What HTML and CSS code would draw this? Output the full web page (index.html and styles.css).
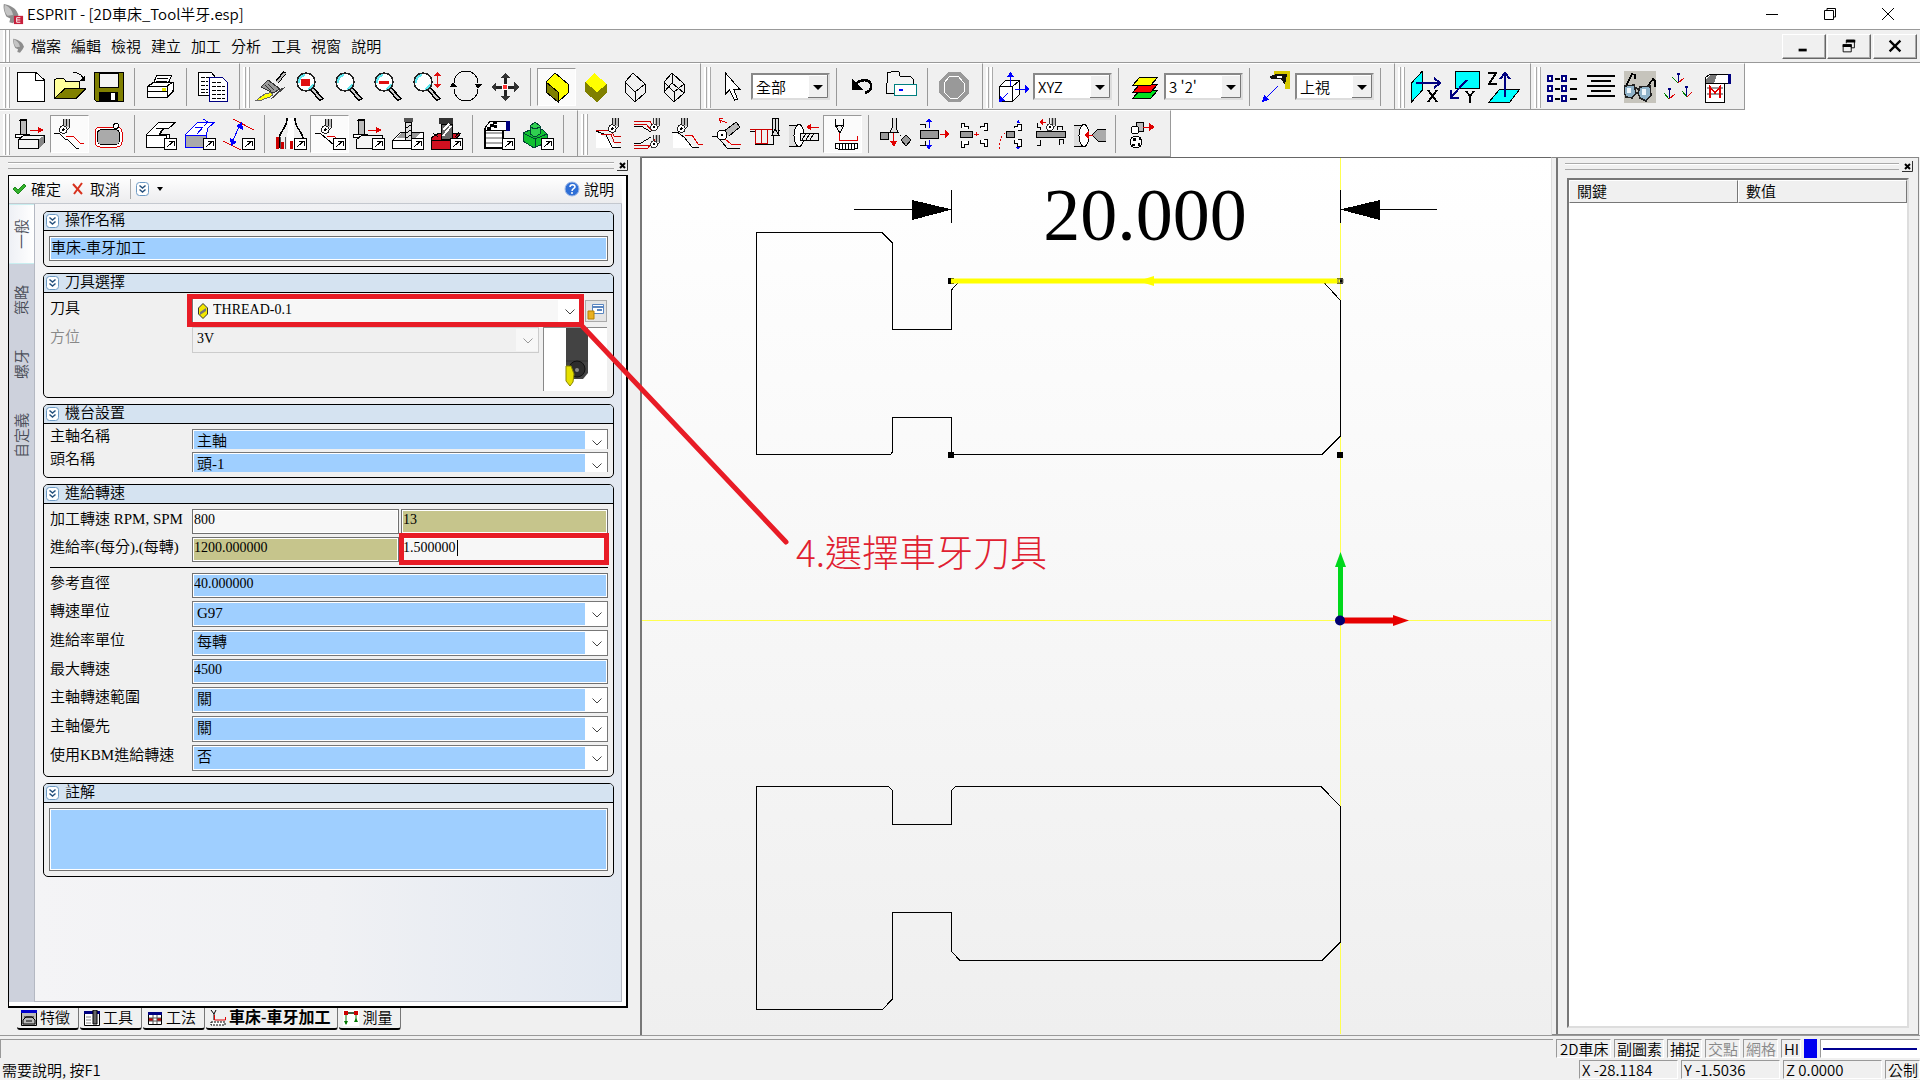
FILE: index.html
```html
<!DOCTYPE html>
<html lang="zh-Hant">
<head>
<meta charset="utf-8">
<title>ESPRIT - [2D車床_Tool半牙.esp]</title>
<link rel="stylesheet" href="styles.css">
</head>
<body>
<svg class="defs" aria-hidden="true">
  <defs>
    <symbol id="go" viewBox="0 0 32 32"><path d="M19.500 20.500h12v11h-12z" fill="#fff" stroke="#000"/><path d="M22 29l7-6M24 23h5v5" fill="none" stroke="#000"/></symbol>
    <symbol id="tip" viewBox="0 0 16 18"><path d="M6 0v7M13 0v9l-5 7" fill="none" stroke="#000"/><path d="M7 0h5v9H7z" fill="#bbb"/><path d="M9.500 0v8" stroke="#000"/><circle cx="6" cy="12" r="4.500" fill="#fff" stroke="#000"/><circle cx="6" cy="12" r="1.500"/></symbol>
    <symbol id="lens" viewBox="0 0 32 32"><path d="M18 18l10 11" stroke="#000" stroke-width="5"/><path d="M18 18l9 10" stroke="#ccc" stroke-width="2"/><circle cx="12" cy="11" r="9" fill="#fff" stroke="#222" stroke-width="1.500"/><path d="M5 12a7 7 0 0 1 6-8M14 18a7 7 0 0 0 5-5" fill="none" stroke="#5fe8f0" stroke-width="2"/></symbol>
    <symbol id="down" viewBox="0 0 13 14"><rect x=".5" y=".5" width="12" height="13" rx="3" fill="#fff" stroke="#6d9ac4"/><path d="M3.500 3.500l3 2.500 3-2.500M3.500 7.500l3 2.500 3-2.500" fill="none" stroke="#27527e" stroke-width="1.500"/></symbol>
    <symbol id="vee" viewBox="0 0 22 22"><path d="M0 0h22v22H0z" fill="#fff"/><path d="M7.500 9.500l4.500 4.500 4.500-4.500" fill="none" stroke="#444"/></symbol>
    <symbol id="tri" viewBox="0 0 20 23"><path d="M0 0h20v23H0z" fill="#f0f0f0"/><path d="M.5 22V.5H19" fill="none" stroke="#fff"/><path d="M19.500 0v22.500H0" fill="none" stroke="#777"/><path d="M5 10h10l-5 5z"/></symbol>
    <symbol id="shut" viewBox="0 0 11 11"><path d="M0 0h11v11H0z" fill="#f0f0f0"/><path d="M10.500 0v10.500H0" fill="none" stroke="#333"/><path d="M3 3l5 5M8 3L3 8" stroke="#000" stroke-width="2"/></symbol>
    <symbol id="rocket" viewBox="0 0 24 24"><path d="M2 1c6 1 12 4 14 8l2 4-2 4-4 5-4-1 1-4-4-2C3 11 1 6 2 1z" fill="#8d8d8d"/><path d="M3 2c4 2 8 5 9 11l-6 1C3 11 2 6 3 2z" fill="#c4c4c4"/></symbol>
  </defs>
</svg>

<div class="app">
  <header class="title">
    <svg class="logo" viewBox="0 0 24 24"><use href="#rocket"/><path d="M13 14h10v9H13z" fill="#c8203c"/><path d="M20 16h-4v5h4M16 18.500h4" fill="none" stroke="#fff"/></svg>
    <h1>ESPRIT - [2D車床_Tool半牙.esp]</h1>
    <div class="wins">
      <button aria-label="最小化"><svg viewBox="0 0 16 16"><path d="M2 8.500h12" stroke="#000"/></svg></button>
      <button aria-label="還原"><svg viewBox="0 0 16 16"><path d="M2.500 4.500h9v9h-9zM5 4V2.500h8.500V11H12" fill="none" stroke="#000"/></svg></button>
      <button aria-label="關閉"><svg viewBox="0 0 16 16"><path d="M2 2l12 12M14 2L2 14" stroke="#000"/></svg></button>
    </div>
  </header>

  <nav class="menu">
    <i class="grip"></i>
    <svg class="mini" viewBox="0 0 24 24"><use href="#rocket"/></svg>
    <a href="#">檔案</a><a href="#">編輯</a><a href="#">檢視</a><a href="#">建立</a><a href="#">加工</a><a href="#">分析</a><a href="#">工具</a><a href="#">視窗</a><a href="#">說明</a>
    <div class="mdi">
      <button aria-label="最小化"><svg viewBox="0 0 20 20"><path d="M4 13h9v3H4z"/></svg></button>
      <button aria-label="還原"><svg viewBox="0 0 20 20"><path d="M7 7V3.500h9V12h-4" fill="none" stroke="#000"/><path d="M7 3h10v3H7zM3 8h10v3H3z"/><path d="M3.500 8.500h9v8h-9z" fill="none" stroke="#000"/></svg></button>
      <button aria-label="關閉"><svg viewBox="0 0 20 20"><path d="M4 4l12 12M16 4L4 16" stroke="#000" stroke-width="2.500"/></svg></button>
    </div>
  </nav>

  <div class="bars">
    <div class="bar"><i class="grip"></i>
      <button><svg viewBox="0 0 32 32"><path d="M2.500 1.500H21l8 7v22H2.500z" fill="#fff" stroke="#000"/><path d="M20.500 1v8H29" fill="none" stroke="#000"/></svg></button>
      <button><svg viewBox="0 0 32 32"><path d="M.5 27V9l3-2h6l2 3h14v7" fill="#ffff9c" stroke="#000"/><path d="M.5 27.500L11 17.500h21l-10 10z" fill="#808000" stroke="#000"/><path d="M19 2c5-1 9 2 11 7" fill="none" stroke="#000"/><path d="M25 10h6V4z"/></svg></button>
      <button><svg viewBox="0 0 32 32"><path d="M1.500 1.500h29v29h-27l-2-2z" fill="#808000" stroke="#000"/><path d="M6.500 2v14.500h19V2z" fill="#f4f4f4" stroke="#000"/><path d="M6 21h19v9H6z"/><path d="M18 22h4v7h-4z" fill="#fff"/></svg></button>
      <i class="sep"></i>
      <button><svg viewBox="0 0 32 32"><path d="M8 13l4-9h15l-5 11" fill="#fff" stroke="#000"/><path d="M12 7h11M11 10h11" stroke="#000"/><path d="M2.500 15.500l6-4h20v8l-6 7h-20z" fill="#fff" stroke="#000" stroke-width="1.500"/><path d="M2 15h20v12M22 15l6-4M2 20h20" fill="none" stroke="#000"/><path d="M17 17h4v3h-4z" fill="#e8e800"/></svg></button>
      <i class="sep"></i>
      <button><svg viewBox="0 0 32 32"><path d="M1.500 1.500h13l4 5v18h-17z" fill="#fff" stroke="#000"/><path d="M4 6h9M4 10h7M4 14h7M4 18h7M4 21h7" stroke="#000" stroke-dasharray="4 1"/><path d="M12.500 6.500h13l5 5v19h-18z" fill="#fff" stroke="#000080"/><path d="M15 11h9M15 15h13M15 19h13M15 23h13M15 27h13" stroke="#000" stroke-dasharray="4 1"/></svg></button>
    </div>
    <div class="bar"><i class="grip"></i>
      <button><svg viewBox="0 0 32 32"><path d="M18 27l13-11-5 1-12 12z" fill="#444"/><path d="M0 30c5-2 8-9 16-8 4 1 0 4-4 5-4 2-8 3-12 3z" fill="#ffff00" stroke="#666"/><path d="M30 1l-8 10" stroke="#000" stroke-width="4"/><path d="M30 2l-8 9" stroke="#bbb" stroke-width="2"/><path d="M13 9l12 9-7 4L6 16z" fill="#999" stroke="#333"/><path d="M10 14l6 6M13 13l6 6" stroke="#333"/></svg></button>
      <button><svg viewBox="0 0 32 32"><use href="#lens"/><path d="M7 8h9v7H7z" fill="#e01010"/></svg></button>
      <button><svg viewBox="0 0 32 32"><use href="#lens"/></svg></button>
      <button><svg viewBox="0 0 32 32"><use href="#lens"/><path d="M7 10h10v3H7z" fill="#e01010"/></svg></button>
      <button><svg viewBox="0 0 32 32"><use href="#lens"/><path d="M26.500 3v12" stroke="#e01010"/><path d="M23 5l3.500-4L30 5zM23 13l3.500 4 3.500-4z" fill="#e01010"/></svg></button>
      <button><svg viewBox="0 0 32 32"><path d="M4 12a12 12 0 0 1 24 0M28 18a12 12 0 0 1-24 0" fill="none" stroke="#000"/><path d="M0 16h7l-4-5zM25 13h7l-4 5z"/></svg></button>
      <button><svg viewBox="0 0 32 32"><path d="M16 5v22M5 16h22" stroke="#222" stroke-width="3"/><path d="M11 7l5-5 5 5zM11 25l5 5 5-5zM7 11l-5 5 5 5zM25 11l5 5-5 5z" fill="#333"/><circle cx="16" cy="16" r="3" fill="#f33" stroke="#fff"/></svg></button>
      <i class="sep"></i>
      <button class="on"><svg viewBox="0 0 32 32"><path d="M5 11l9-9 13 11v9l-10 9L5 21z" fill="#ffff00" stroke="#000"/><path d="M5 11l12 10v10L5 21z" fill="#808000" stroke="#000"/></svg></button>
      <button><svg viewBox="0 0 32 32"><path d="M5 11l9-9 13 11-10 8z" fill="#ffff00"/><path d="M5 11l12 10 10-8v9l-10 9L5 21z" fill="#808000"/></svg></button>
      <button><svg viewBox="0 0 32 32"><path d="M6 11l8-9 12 11v9l-10 9L6 21zM6 11l10 10v10M16 21l10-8" fill="none" stroke="#000"/></svg></button>
      <button><svg viewBox="0 0 32 32"><path d="M6 11l8-9 12 11v9l-10 9L6 21zM6 11l10 10v10M16 21l10-8M14 2v10l-8 9M14 12l12 10" fill="none" stroke="#000"/></svg></button>
    </div>
    <div class="bar wide"><i class="grip"></i>
      <button><svg viewBox="0 0 32 32"><path d="M9.500 2v21l4-4 5 10 3-1-4-10h6z" fill="#fff" stroke="#000"/></svg></button>
      <label class="drop old"><select aria-label="選取過濾"><option>全部</option></select><svg viewBox="0 0 20 23"><use href="#tri"/></svg></label>
      <i class="sep"></i>
      <button><svg viewBox="0 0 32 32"><path d="M9 13c4-5 16-6 15 3 0 3-3 5-6 6" fill="none" stroke="#000" stroke-width="2.500"/><path d="M5 8v11h11z"/></svg></button>
      <button><svg viewBox="0 0 32 32"><path d="M1.500 1.500h3l1-1h7l1 1v3l1 1h10l3 3v14h-27z" fill="#f4f4f4" stroke="#000"/><path d="M8.500 13.500h22v11h-22z" fill="#fff" stroke="#008080"/><path d="M13 19h4" stroke="#00f" stroke-width="2"/></svg></button>
      <i class="sep"></i>
      <button><svg viewBox="0 0 32 32"><path d="M10 1h12l9 9v12l-9 9H10l-9-9V10z" fill="#9a9a9a"/><path d="M12 5h8l6 7v9l-6 6h-8l-6-6v-9z" fill="#999" stroke="#fff"/></svg></button>
    </div>
    <div class="bar"><i class="grip"></i>
      <button><svg viewBox="0 0 32 32"><path d="M1.500 15.500l6-6h14v14l-7 7h-13zM1 15.500h13.500v15M14.500 15.500l7-6" fill="#fff" stroke="#000"/><path d="M12.500 15V3M17 18h12M10 22l-7 7" stroke="#00f"/><path d="M9 6l3.500-5L16 6zM27 14l5 4-5 4zM1 31l1-6 5 5z" fill="#00f"/></svg></button>
      <label class="drop old"><select aria-label="座標"><option>XYZ</option></select><svg viewBox="0 0 20 23"><use href="#tri"/></svg></label>
      <i class="sep"></i>
      <button><svg viewBox="0 0 32 32"><path d="M10.500 19.500h18l-7 8h-18z" fill="#00e020" stroke="#000"/><path d="M10.500 13.500h18l-7 8h-18z" fill="#f00" stroke="#000"/><path d="M10.500 6.500h18l-7 8h-18z" fill="#ff0" stroke="#000"/></svg></button>
      <label class="drop old"><select aria-label="圖層"><option>3 '2'</option></select><svg viewBox="0 0 20 23"><use href="#tri"/></svg></label>
      <i class="sep"></i>
      <button><svg viewBox="0 0 32 32"><path d="M14 0h16v18h-5V7H14z" fill="#d6c800"/><path d="M10 5l6-2h11l-2 11-4-6-10 0z" fill="#111"/><path d="M17 5h5v2h-5z" fill="#fff"/><path d="M18 15L4 29" stroke="#00f"/><path d="M2 31l2-7 5 5z" fill="#00f"/></svg></button>
      <label class="drop old"><select aria-label="視角"><option>上視</option></select><svg viewBox="0 0 20 23"><use href="#tri"/></svg></label>
      <i class="sep"></i>
    </div>
    <div class="bar"><i class="grip"></i>
      <button><svg viewBox="0 0 32 32"><path d="M1.500 12l11-12v19l-11 12z" fill="#0ff" stroke="#000"/><path d="M6 12h23M24 7l6 5-6 5" fill="none" stroke="#000080" stroke-width="2"/><path d="M18 19l9 12M27 19l-9 12" stroke="#000" stroke-width="2"/></svg></button>
      <button><svg viewBox="0 0 32 32"><path d="M6.500 .5h24v17h-24z" fill="#0ff" stroke="#000"/><path d="M18 9L2 26M2 19v8h8" fill="none" stroke="#000080" stroke-width="2"/><path d="M17 20l4 5 4-5M21 25v7" fill="none" stroke="#000" stroke-width="2"/></svg></button>
      <button><svg viewBox="0 0 32 32"><path d="M11.500 18.500h20l-10 13h-21z" fill="#0ff" stroke="#000"/><path d="M0 2h8L1 13h8" fill="none" stroke="#000" stroke-width="2"/><path d="M17 26V3M12 8l5-6 5 6" fill="none" stroke="#000080" stroke-width="2"/></svg></button>
    </div>
    <div class="bar"><i class="grip"></i>
      <button><svg viewBox="0 0 32 32"><path d="M2 5h4v5H2zM16 5h4v5h-4zM2 15h4v5H2zM16 15h4v5h-4zM2 25h4v5H2zM16 25h4v5h-4z" fill="#fff" stroke="#000080" stroke-width="2"/><path d="M9 8h5M24 8h7M9 18h5M24 18h7M9 28h5M24 28h7" stroke="#000" stroke-width="2"/></svg></button>
      <button><svg viewBox="0 0 32 32"><path d="M2 5h28M6 10h20M2 15h28M6 20h20M2 25h28" stroke="#000" stroke-width="2"/></svg></button>
      <button><svg viewBox="0 0 32 32"><path d="M0 0h32v32H0z" fill="#c6c4bc"/><path d="M2 15L8 3l3 1v4M20 20L29 8l2 2v6" fill="none" stroke="#000" stroke-width="1.500"/><path d="M10 16l8 4" stroke="#222" stroke-width="2"/><path d="M1 15l9-1 2 8-4 5-6-1-2-5z" fill="#8fb2c8" stroke="#222" stroke-width="1.500"/><path d="M16 16l10-1 1 9-5 6-6-3-2-5z" fill="#8fb2c8" stroke="#222" stroke-width="1.500"/><path d="M3 17h4v5H3zM18 18h4v6h-4z" fill="#eef6fb"/></svg></button>
      <button><svg viewBox="0 0 32 32"><path d="M15.500 12V2M6.500 28V17M23.500 26V15" stroke="#000080"/><path d="M15 12l6-5M6 28l6-5M24 26l5-5" stroke="#e00000"/><path d="M15 12l-6-6M6 28l-5-6M24 26l-5-6" stroke="#008000"/><path d="M14 2h3v2h-3zM5 17h3v2H5zM22 15h3v2h-3z" fill="#000080"/></svg></button>
      <button><svg viewBox="0 0 32 32"><path d="M3.500 12v19h19V12z" fill="#fff" stroke="#000"/><path d="M3 12V7l5-4h18v9z" fill="#fff" stroke="#000"/><path d="M4 8l4-4h7l-3 8H4z" fill="#777"/><path d="M26 3h3v10h-3z" fill="#000080"/><path d="M5 17h16M5 23h16" stroke="#999" stroke-width="2"/><path d="M8 27V16l5 6 5-6v11" fill="none" stroke="#e00000" stroke-width="1.500"/></svg></button>
    </div>
  </div>

  <div class="bars">
    <div class="bar"><i class="grip"></i>
      <button><svg viewBox="0 0 32 32"><path d="M5 1h6v15H5z" fill="#bbb" stroke="#000"/><path d="M4 2h8M0 16h14v3H0z" fill="#fff" stroke="#000"/><path d="M3.500 21.500l5-4h21v7l-6 6h-20z" fill="#f4f4f4" stroke="#000"/><path d="M3 21h20v9" fill="none" stroke="#000"/><path d="M24 21l5-3v7l-5 5z" fill="#888"/><path d="M15 12h10" stroke="#e00000"/><path d="M23 9l6 3-6 3z" fill="#e00000"/></svg></button>
      <button class="on"><svg viewBox="0 0 32 32"><use href="#tip" x="4" y="1" width="14" height="16"/><path d="M0 15h5l6 6 2 0 9 9h3" fill="none" stroke="#000"/><path d="M12 18h7l7 7h4" fill="none" stroke="#e00000"/></svg></button>
      <button><svg viewBox="0 0 32 32"><rect x="2" y="9" width="27" height="20" rx="5" fill="#fff" stroke="#e00000"/><rect x="4.500" y="11.500" width="22" height="15" rx="4" fill="#aaa" stroke="#000"/><circle cx="23" cy="8" r="2.500" fill="#fff" stroke="#000"/></svg></button>
      <i class="sep"></i>
      <button><svg viewBox="0 0 32 32"><path d="M1 17L14 4h17l-7 6h-5l-4 6h9v13H1z" fill="#fff" stroke="#000"/><path d="M1 17h20v12M11 10h8l-5 6" fill="none" stroke="#000"/><use href="#go"/></svg></button>
      <button><svg viewBox="0 0 32 32"><path d="M1 17L14 4h17l-7 6-2 8v11H1z" fill="#fff" stroke="#00f"/><path d="M1 17h21v12H1z" fill="#aaa" stroke="#00f"/><path d="M11 9h8l-6 7M19 1l5 3-4 4" fill="none" stroke="#00f"/><use href="#go"/></svg></button>
      <button><svg viewBox="0 0 32 32"><path d="M10 1l21 11M0 23l18 9" stroke="#e00000"/><path d="M9 25l8-19" stroke="#00f"/><path d="M19 4l1 8-7-4zM8 28l-1-8 7 4z" fill="#00f"/><use href="#go"/></svg></button>
      <i class="sep"></i>
      <button><svg viewBox="0 0 32 32"><path d="M12 0c0 12-8 12-8 22v8M20 0c0 12 8 12 8 22" fill="none" stroke="#000" stroke-width="1.500"/><path d="M13 0h6v31h-7z" fill="#fff"/><path d="M1 19h3v12H1zM6 24h3v7H6zM15 23h3v8h-3z" fill="#c00"/><path d="M5 19v12M10 19v12" stroke="#555"/><use href="#go"/></svg></button>
      <button class="on"><svg viewBox="0 0 32 32"><use href="#tip" x="6" y="1" width="14" height="16"/><path d="M1 15h5l7 6 7 6h10" fill="none" stroke="#000"/><path d="M13 18h7l4 4" fill="none" stroke="#e00000"/><use href="#go"/></svg></button>
      <button><svg viewBox="0 0 32 32"><path d="M5 1h6v15H5z" fill="#bbb" stroke="#000"/><path d="M4 2h8M0 16h14v3H0z" fill="#fff" stroke="#000"/><path d="M3.500 21.500l5-4h21v7l-6 6h-20z" fill="#f4f4f4" stroke="#000"/><path d="M15 12h10" stroke="#e00000"/><path d="M23 9l6 3-6 3z" fill="#e00000"/><use href="#go"/></svg></button>
      <button><svg viewBox="0 0 32 32"><path d="M.5 22.500l8-8h23v7l-8 9H.5z" fill="#fff" stroke="#000"/><path d="M5 20h18l5-5H9z" fill="#999"/><path d="M12 0h9v4h-9z" fill="#555"/><path d="M13.500 4h6v18h-6z" fill="#ddd" stroke="#000"/><path d="M14 10l5-3M14 15l5-3M14 20l5-3" stroke="#000"/><path d="M0 22h23" stroke="#000"/><use href="#go"/></svg></button>
      <button><svg viewBox="0 0 32 32"><path d="M0 20l8-5h22l-6 7v9H0z" fill="#d01020" stroke="#000"/><path d="M0 22h24" stroke="#000"/><path d="M8 0h14v6H8z" fill="#333"/><path d="M10 6h11v15H10z" fill="#666" stroke="#000"/><path d="M12 18l8-10M12 12l6-6" stroke="#fff" stroke-width="2"/><path d="M2 15l5 4M28 14l-4 5" stroke="#000"/><use href="#go"/></svg></button>
      <i class="sep"></i>
      <button><svg viewBox="0 0 32 32"><path d="M2 11h18v19H2z" fill="#fff" stroke="#000" stroke-width="2"/><path d="M3 15h16M3 20h16M3 25h16" stroke="#aaa" stroke-width="2"/><path d="M2 10l5-7h19v9H2z" fill="#fff" stroke="#000"/><path d="M4 9h3V6h3V3h4v3h-3v3H8v3H4zM11 10h3V7h-3z"/><path d="M23 3h4v10h-4z" fill="#000080"/><use href="#go"/></svg></button>
      <button><svg viewBox="0 0 32 32"><path d="M1 15l9-4h10l5 5v8l-13 6-11-7z" fill="#10c030" stroke="#043"/><path d="M1 15l12 6 12-5M13 21v9" fill="none" stroke="#043"/><path d="M8 8l5-4 5 4v8l-5 3-5-3z" fill="#30d050" stroke="#043"/><path d="M8 9l5 2 5-2" fill="none" stroke="#043"/><use href="#go"/></svg></button>
      <i class="sep"></i>
    </div>
    <div class="bar wide"><i class="grip"></i>
      <button><svg viewBox="0 0 32 32"><path d="M3 13l24 17H3z" fill="#fff"/><path d="M3 13l10 4 6 12h9" fill="none" stroke="#000"/><path d="M3 12h15l3 6h7M8 16h10l3 8h7" fill="none" stroke="#c00"/><use href="#tip" x="14" y="0" width="14" height="16"/></svg></button>
      <button><svg viewBox="0 0 32 32"><path d="M2 3h16l4 8M2 6h12l6 7M2 27h18l3-6M2 30h14l5-7" fill="none" stroke="#c00"/><path d="M2 8h7l10 6M2 25h7l10-6" fill="none" stroke="#000"/><use href="#tip" x="17" y="0" width="13" height="14"/><use href="#tip" x="17" y="17" width="13" height="14"/></svg></button>
      <button><svg viewBox="0 0 32 32"><path d="M2 13l24 17H2z" fill="#fff"/><use href="#tip" x="5" y="0" width="14" height="16"/><path d="M1 14h5l7 5 8 10h7" fill="none" stroke="#000"/><path d="M14 17h7l6 9h5" fill="none" stroke="#e00000"/></svg></button>
      <button><svg viewBox="0 0 32 32"><path d="M2 18h5l10 12h13" fill="none" stroke="#000"/><path d="M15 21l6 5h10" fill="none" stroke="#e00000"/><path d="M13 14L26 4l4 5-11 9" fill="#bbb" stroke="#000"/><circle cx="12" cy="17" r="5" fill="#fff" stroke="#000"/><circle cx="12" cy="17" r="1.500"/><path d="M17 5l-7-3M9 1l4-1M9 1l2 4" stroke="#e00000"/></svg></button>
      <button><svg viewBox="0 0 32 32"><path d="M1 13h5v13h18V12h7" fill="none" stroke="#000"/><path d="M1 11h23M6 11v14h12V11M12 11v14M18 11v14" fill="none" stroke="#c00"/><path d="M23 0h6v17h-6z" fill="#ddd" stroke="#000"/><path d="M26 1v10l-3 6h7l-4-6" fill="none" stroke="#000"/></svg></button>
      <button><svg viewBox="0 0 32 32"><path d="M1 7h9M1 28h9" stroke="#000"/><path d="M1 8h8v20H1z" fill="#ddd"/><ellipse cx="11" cy="17.500" rx="5" ry="11" fill="#fff" stroke="#000"/><path d="M12 15h18v7H12z" fill="#eee" stroke="#000"/><path d="M14 22l4-7M18 22l4-7M22 22l4-7" stroke="#000"/><path d="M21 9h10" stroke="#e00000"/><path d="M23 6l-5 3 5 3z" fill="#e00000"/></svg></button>
      <button class="on"><svg viewBox="0 0 32 32"><path d="M8.500 1v5l2 3M16.500 1v5l-2 3M8 7h9l-4 8z" fill="#eee" stroke="#000"/><path d="M12.500 15v7h18v-4" fill="none" stroke="#e00000"/><rect x="8" y="25" width="23" height="6" rx="3" fill="#fff" stroke="#000"/><path d="M12 25v6M15 25v6M18 25v6M21 25v6M24 25v6M27 25v6" stroke="#000"/></svg></button>
      <i class="sep"></i>
      <button><svg viewBox="0 0 32 32"><path d="M1.500 14.500h8v7h-8z" fill="#999" stroke="#000"/><path d="M22 22l5-5 5 5-5 6z" fill="#999" stroke="#000"/><path d="M13 0v10l-2 4h8l-2-4V0" fill="#ddd" stroke="#000"/><path d="M14.500 15v10" stroke="#e00000"/><path d="M11 23h7l-3 6z" fill="#e00000"/><path d="M18 14l6 6" stroke="#000" stroke-dasharray="2"/></svg></button>
      <button><svg viewBox="0 0 32 32"><path d="M2.500 12.500h18v8h-18z" fill="#999" stroke="#000"/><path d="M2 6h5v4M2 27h5v-4" fill="none" stroke="#000"/><path d="M11 4v6M11 22v7" stroke="#00f"/><path d="M8 4l3-4 3 4zM8 27l3 5 3-5z" fill="#00f"/><path d="M22 16h7" stroke="#e00000"/><path d="M27 12l5 4-5 4z" fill="#e00000"/></svg></button>
      <button><svg viewBox="0 0 32 32"><path d="M3.500 13.500h12v6h-12z" fill="#999" stroke="#000"/><path d="M4 10V5h3v3h4v3M4 23v6h3v-3h4v-3M23 10V8h4V5h3v7h-3M23 22v3h4v3h3v-7h-3" fill="#fff" stroke="#000"/><path d="M17 16h5M19 14v4" stroke="#e00000"/></svg></button>
      <button><svg viewBox="0 0 32 32"><path d="M10.500 13.500h8v6h-8z" fill="#999" stroke="#000"/><path d="M9 15C5 18 3 23 3 31" fill="none" stroke="#e00000" stroke-dasharray="2"/><path d="M18 10V8h3V6h4v6h-3M18 22v3h3v3h4v-7h-3" fill="#fff" stroke="#000"/><path d="M21 5l1-4 2 4zM20 29l2 3 2-3z" fill="#00f"/></svg></button>
      <button><svg viewBox="0 0 32 32"><path d="M1.500 13.500h29v6h-29z" fill="#999" stroke="#000"/><path d="M2 5v4h3v3M2 27h3v-5M22 12V8h5v4M24 27v-6h4v5" fill="none" stroke="#000"/><use href="#tip" x="10" y="0" width="13" height="14"/><path d="M8 4h3" stroke="#e00000"/><path d="M4 4l4-3v6z" fill="#e00000"/></svg></button>
      <button><svg viewBox="0 0 32 32"><path d="M0 7h9v21H0z" fill="#ddd"/><path d="M0 7h9M0 28h9" stroke="#000"/><ellipse cx="10" cy="17.500" rx="5" ry="11" fill="#fff" stroke="#000"/><path d="M18 17l6-6h8v12h-8z" fill="#aaa" stroke="#000"/><path d="M13 17h6" stroke="#e00000"/><path d="M10 17l5-4v8z" fill="#e00000"/></svg></button>
      <i class="sep"></i>
      <button><svg viewBox="0 0 32 32"><path d="M10 4h7v9h-7z" fill="#bbb" stroke="#000"/><circle cx="9" cy="12" r="4" fill="#fff" stroke="#000"/><path d="M17 9h8" stroke="#e00000"/><path d="M23 5l6 4-6 4z" fill="#e00000"/><circle cx="10" cy="24" r="6" fill="#fff" stroke="#000"/><path d="M7 20h3v3H7zM13 19h2v3h-2zM6 26h3v2H6zM12 25h2v3h-2z"/></svg></button>
    </div>
  </div>

  <main class="work">
    <aside class="dock">
      <div class="hold"><i></i><button aria-label="關閉面板"><svg viewBox="0 0 11 11"><use href="#shut"/></svg></button></div>
      <div class="panel">
        <div class="acts">
          <button><svg class="s16" viewBox="0 0 16 16"><path d="M2 8l2-2 3 3 6-6 2 2-8 8z" fill="#35b02c" stroke="#1c8a1c"/></svg>確定</button>
          <button class="no"><svg class="s16" viewBox="0 0 16 16"><path d="M3 3l9 10M12 2L4 13" stroke="#d8321e" stroke-width="2"/></svg>取消</button>
          <button class="more"><svg class="chev" viewBox="0 0 13 14"><use href="#down"/></svg><svg class="dot" viewBox="0 0 6 4"><path d="M0 0h6L3 4z"/></svg></button>
          <button class="help"><svg class="s16" viewBox="0 0 16 16"><circle cx="8" cy="8" r="7" fill="#2f6fd6" stroke="#9fb9e6"/><path d="M6 6c0-3 5-3 5 0 0 1.500-3 1.500-3 4M8 11v2" fill="none" stroke="#fff" stroke-width="1.500"/></svg>說明</button>
        </div>
        <div class="pages">
          <div class="side">
            <button class="cur">一般</button><button>策略</button><button>螺牙</button><button>自定義</button>
          </div>
          <form class="form">
            <section class="g">
              <h2><svg class="chev" viewBox="0 0 13 14"><use href="#down"/></svg>操作名稱</h2>
              <div class="one"><input aria-label="操作名稱" value="車床-車牙加工"></div>
            </section>
            <section class="g">
              <h2><svg class="chev" viewBox="0 0 13 14"><use href="#down"/></svg>刀具選擇</h2>
              <div class="tool">
                <label for="f1">刀具</label>
                <div class="pick">
                  <span class="drop red"><svg class="ins" viewBox="0 0 10 16"><path d="M5 .5L9.500 5v6L5 15.500.5 11V5z" fill="#f4e800" stroke="#333"/><path d="M2 9l6-4v3l-6 4z" fill="#777"/></svg><select id="f1" class="pale"><option>THREAD-0.1</option></select><svg viewBox="0 0 22 22"><use href="#vee"/></svg></span>
                  <button type="button" class="lib" aria-label="刀具庫"><svg viewBox="0 0 20 20"><path d="M6.500 3.500h11v9h-11z" fill="#fff" stroke="#5b86c0"/><path d="M6 6h11M11 9h5" stroke="#5b86c0" stroke-width="2"/><path d="M2 10h6v8H2z" fill="#e9b020" stroke="#b78000"/></svg></button>
                </div>
                <label for="f2" class="dim">方位</label>
                <div class="pick top">
                  <span class="drop off"><select id="f2" disabled><option>3V</option></select><svg viewBox="0 0 22 22"><use href="#vee"/></svg></span>
                  <svg class="pic" viewBox="0 0 64 64"><path d="M0 0h64v64H0z" fill="#fff"/><path d="M0 .5h64M.5 0v64" stroke="#888"/><path d="M23 1h22v45l-5 6H27l-4-8z" fill="#434343"/><path d="M23 34h22" stroke="#333"/><circle cx="34" cy="42" r="8" fill="#2d2d2d" stroke="#111"/><path d="M23 39l5 0 3 8-1 8-3 4-4-5z" fill="#e6e000" stroke="#8a8600"/><circle cx="34" cy="43" r="2" fill="#888"/></svg>
                </div>
              </div>
            </section>
            <section class="g">
              <h2><svg class="chev" viewBox="0 0 13 14"><use href="#down"/></svg>機台設置</h2>
              <div class="rows cut">
                <label for="f3">主軸名稱</label><span class="drop"><select id="f3"><option>主軸</option></select><svg viewBox="0 0 22 22"><use href="#vee"/></svg></span>
                <label for="f4">頭名稱</label><span class="drop"><select id="f4"><option>頭-1</option></select><svg viewBox="0 0 22 22"><use href="#vee"/></svg></span>
              </div>
            </section>
            <section class="g">
              <h2><svg class="chev" viewBox="0 0 13 14"><use href="#down"/></svg>進給轉速</h2>
              <div class="rows">
                <label for="f5">加工轉速 RPM, SPM</label><span class="pair"><input id="f5" class="pale" value="800"><input aria-label="SPM" class="olive" value="13"></span>
                <label for="f6">進給率(每分),(每轉)</label><span class="pair"><input id="f6" class="olive" value="1200.000000"><input aria-label="每轉" class="pale" value="1.500000"></span>
                <hr>
                <label for="f7">參考直徑</label><input id="f7" value="40.000000">
                <label for="f8">轉速單位</label><span class="drop"><select id="f8"><option>G97</option></select><svg viewBox="0 0 22 22"><use href="#vee"/></svg></span>
                <label for="f9">進給率單位</label><span class="drop"><select id="f9"><option>每轉</option></select><svg viewBox="0 0 22 22"><use href="#vee"/></svg></span>
                <label for="f10">最大轉速</label><input id="f10" value="4500">
                <label for="f11">主軸轉速範圍</label><span class="drop"><select id="f11"><option>關</option></select><svg viewBox="0 0 22 22"><use href="#vee"/></svg></span>
                <label for="f12">主軸優先</label><span class="drop"><select id="f12"><option>關</option></select><svg viewBox="0 0 22 22"><use href="#vee"/></svg></span>
                <label for="f13">使用KBM進給轉速</label><span class="drop"><select id="f13"><option>否</option></select><svg viewBox="0 0 22 22"><use href="#vee"/></svg></span>
              </div>
            </section>
            <section class="g">
              <h2><svg class="chev" viewBox="0 0 13 14"><use href="#down"/></svg>註解</h2>
              <div class="one"><textarea aria-label="註解"></textarea></div>
            </section>
          </form>
        </div>
      </div>
      <div class="tabs">
        <button><svg class="s16" viewBox="0 0 16 16"><path d="M.5 .5h15v15H.5z" fill="#bbb" stroke="#000"/><path d="M0 0h16v3H0z" fill="#00c"/><path d="M3 7h10M2 10l3-3h6l3 3v4H2zM5 11h6" fill="none" stroke="#000"/></svg>特徵</button>
        <button><svg class="s16" viewBox="0 0 16 16"><path d="M.5 1.500h15v14H.5z" fill="#fff" stroke="#000"/><path d="M0 1h16v3H0z" fill="#000080"/><path d="M2 7h5M2 10h5M2 13h5" stroke="#888"/><path d="M9 0h4v14H9z" fill="#666" stroke="#000"/></svg>工具</button>
        <button><svg class="s16" viewBox="0 0 16 16"><path d="M1.500 2.500h13v12h-13z" fill="#fff" stroke="#000"/><path d="M1 2h14v3H1z" fill="#000080"/><path d="M2 8h4v3H2zM10 8h4v3h-4z" fill="#c00"/><path d="M2 8h12M2 11h12M6 5v9M10 5v9" stroke="#555"/></svg>工法</button>
        <button class="cur"><svg class="s16" viewBox="0 0 16 16"><path d="M1 0l3 4 2-4M4 4v6" fill="none" stroke="#000"/><path d="M4.500 5v5h11V7" fill="none" stroke="#e00000"/><path d="M1 12h14v3H1z" fill="#fff" stroke="#000" stroke-dasharray="2 1"/></svg>車床-車牙加工</button>
        <button><svg class="s16" viewBox="0 0 16 16"><path d="M0 0h16v16H0z" fill="#fff"/><path d="M3 14V3h10v9" fill="none" stroke="#070"/><path d="M3 3h10" stroke="#000"/><path d="M1 1h4v4H1zM11 1h4v4h-4z" fill="#c00"/><path d="M1 11l2 4 2-4zM11 12l2-4 2 4z" fill="#070"/></svg>測量</button>
      </div>
    </aside>

    <section class="view">
      <!-- part profile, world axes and length dimension -->
      <svg class="draw" viewBox="0 0 910 877" width="910" height="877">
        <g transform="translate(-642 -157)" fill="none">
          <path d="M1340.500 157v878M642 620.500h910" stroke="#ffff50"/>
          <g stroke="#000" class="crisp">
            <path d="M756.500 232.500H882l10 10v87h59v-39l8-9H1323l17.500 19V436L1322 454.500H951.500v-37h-59V452l-2 2.500H756.500z"/>
            <path d="M756.500 786.500H888.500l4 4v34h59v-34l4-4H1321l19.500 20V942L1322 960.500H960l-8.500-9v-39h-59V999l-9.500 10H756.500z"/>
            <path d="M854 209.500h62M951.500 190v33M1340.500 190v33M1376 209.500h61"/>
            <path d="M912 200l40 9.500-40 10.500zM1380 200l-40 9.500 40 10.500z" fill="#000" stroke="none"/>
            <path d="M948 278h6v6h-6zM1337 278h6v6h-6zM948 452h6v6h-6zM1337 452h6v6h-6z" fill="#000" stroke="none"/>
          </g>
          <path d="M951 281h389" stroke="#ff0" stroke-width="5"/><path d="M1138 281l16-5v10z" fill="#ff0"/>
          <path d="M1338 279h5v4h-5z" stroke="#776"/>
          <path d="M1340.500 620V565" stroke="#00d81c" stroke-width="5"/><path d="M1335 567l5.500-15 5.500 15z" fill="#00d81c"/>
          <path d="M1340 620.500h54" stroke="#e60000" stroke-width="6"/><path d="M1393 615l16 5.500-16 5.500z" fill="#e60000"/>
          <circle cx="1340" cy="620.500" r="5" fill="#000070"/>
          <text x="1145" y="240" class="size">20.000</text>
        </g>
      </svg>
    </section>

    <aside class="keys">
      <div class="hold"><i></i><button aria-label="關閉面板"><svg viewBox="0 0 11 11"><use href="#shut"/></svg></button></div>
      <div class="list"><table><thead><tr><th>關鍵</th><th>數值</th></tr></thead></table></div>
    </aside>
  </main>

  <footer class="status">
    <div class="line"><span class="msg"></span><span class="c w55">2D車床</span><span class="c w50">副圖素</span><span class="c w35">捕捉</span><span class="c w35 dim">交點</span><span class="c w35 dim">網格</span><span class="c w20">HI</span><span class="blue"></span><span class="c pen"><i></i></span></div>
    <div class="line"><span class="tipmsg">需要說明, 按F1</span><span class="c w99">X -28.1184</span><span class="c w99">Y -1.5036</span><span class="c w99">Z 0.0000</span><span class="c w35">公制</span></div>
  </footer>

  <!-- red callout and text caret laid over the form and the drawing -->
  <svg class="note" viewBox="0 0 1100 600" width="1100" height="600">
    <path d="M457.500 540v16" stroke="#000"/>
    <g fill="none" stroke="#e81c26" stroke-width="5"><path d="M189.500 296.500h392v28h-392z"/><path d="M401.500 535.500h205v27h-205z"/><path d="M583 327l203 215" stroke-linecap="round"/></g>
    <text x="796" y="567">4.選擇車牙刀具</text>
  </svg>
</div>
</body>
</html>
```
FILE: styles.css
```css
* { box-sizing: border-box; }
body { margin: 0; background: #f0f0f0; color: #000; font: 350 15px/20px "Noto Sans CJK TC", sans-serif; }
button, input, select, textarea { font: inherit; color: inherit; margin: 0; border: 0; border-radius: 0; }
button { background: none; padding: 0; }
.defs { position: absolute; width: 0; height: 0; }
.app { position: relative; display: flex; flex-direction: column; min-height: 100vh; }

.title { display: flex; align-items: center; height: 30px; padding: 0 3px 2px 2px; background: #fff; border-bottom: 1px solid #999; }
.logo { width: 22px; height: 22px; }
.title h1 { flex: 1; margin: 0 0 0 3px; font-size: 15px; font-weight: 350; }
.wins { display: flex; }
.wins button { width: 58px; height: 26px; }
.wins svg { width: 16px; height: 16px; display: block; margin: auto; }

.menu { display: flex; align-items: center; gap: 10px; height: 33px; border-bottom: 1px solid #999; padding-right: 3px; }
.menu a { color: #000; text-decoration: none; }
.mini { width: 16px; height: 18px; margin: 0 -7px 0 0; }
.menu .grip { margin: 0 -8px 0 3px; }
.mdi { display: flex; gap: 1px; margin-left: auto; }
.mdi button { width: 44px; height: 25px; background: #f0f0f0; border: 1px solid; border-color: #fff #666 #666 #fff; box-shadow: inset -1px -1px #aaa; }
.mdi button:last-child { margin-left: 1px; }
.mdi svg { width: 20px; height: 18px; display: block; margin: auto; }
.grip { flex: none; width: 7px; align-self: stretch; margin: 3px 1px 1px 3px; border-right: 1px solid #aaa; background: linear-gradient(90deg, #fff 2px, #aaa 2px 3px, #f0f0f0 3px 4px, #fff 4px); }

.bars { display: flex; height: 47px; background: #fff; }
.bar { display: flex; align-items: center; padding-right: 7px; background: #f0f0f0; border: 1px solid; border-color: #fff #999 #999 #fff; border-left: 0; }
.bar.wide { padding-right: 9px; }
.bar button { width: 39px; height: 38px; display: grid; place-items: center; }
.bar button svg { width: 32px; height: 32px; shape-rendering: crispEdges; }
.bar button.on { background: #fbfbfb; border: 1px solid; border-color: #999 #fff #fff #999; }
.sep { width: 1px; height: 38px; margin: 0 6px; background: #999; }

.drop { display: grid; grid-template-columns: minmax(0, 1fr); align-items: center; height: 26px; background: #fff; border: 1px solid #777; }
.drop > select, .drop > svg { grid-area: 1 / 1; }
.drop > svg { justify-self: end; width: 22px; height: 22px; pointer-events: none; }
.drop select { appearance: none; height: 22px; margin: 0 1px; padding: 0 0 2px 3px; background: #9fcfff; }
.drop.old { width: 79px; border: 2px solid; border-color: #888 #ddd #ddd #888; height: 27px; }
.drop.old select { background: #fff; padding: 0 20px 0 2px; }
.drop.old > svg { width: 20px; height: 23px; }

.work { flex: 1; display: flex; min-height: 0; }
.dock { width: 642px; flex: none; padding: 3px 12px 0 8px; border-right: 2px solid #777; display: flex; flex-direction: column; }
.hold { display: flex; align-items: center; gap: 3px; height: 11px; }
.hold i { flex: 1; height: 7px; border: solid #aaa; border-width: 1px 0; box-shadow: inset 0 1px #fff; }
.hold button, .hold svg { width: 11px; height: 11px; display: block; }
.panel { flex: 1; display: flex; flex-direction: column; margin-top: 4px; border: 1px solid #000; border-right-width: 2px; border-bottom-width: 2px; padding: 0 4px 4px 0; background: #fff; }
.acts { display: flex; align-items: center; height: 28px; padding: 0 8px 2px 2px; background: linear-gradient(#fff, #ececee); border-bottom: 1px solid #c4c8cf; }
.acts button { display: flex; align-items: center; gap: 4px; }
.s16 { width: 16px; height: 16px; flex: none; }
.acts .no { margin-left: 9px; }
.acts .more { margin-left: 10px; padding-left: 5px; border-left: 1px solid #aaa; gap: 8px; height: 20px; }
.acts .help { margin-left: auto; }
.chev { width: 13px; height: 14px; flex: none; }
.dot { width: 6px; height: 4px; }
.pages { flex: 1; display: flex; font-family: "Liberation Serif", "Noto Sans CJK TC", serif; }
.side { width: 26px; background: #cdd1dc; border-right: 1px solid #b4b8c2; }
.side button { display: block; writing-mode: vertical-rl; transform: rotate(180deg); width: 25px; padding: 17px 2px; color: #4a4e58; text-orientation: sideways; }
.side .cur { background: linear-gradient(90deg, #fff, #eef0f5); padding: 14px 2px; margin-bottom: 4px; border: solid #c9eef0; border-width: 1px 0; }
.form { flex: 1; padding: 7px 7px 7px 8px; display: flex; flex-direction: column; gap: 6px; background: linear-gradient(90deg, #f4f4f6, #f0f1f4 50%, #e2e8f1); border: solid #b4b8c2; border-width: 0 1px 1px 0; }
.g { border: 1px solid #000; border-radius: 5px; background: #f0f0f0; }
.g h2 { display: flex; align-items: center; gap: 6px; height: 19px; margin: 0; padding: 0 0 1px 2px; font-size: 15px; line-height: 15px; font-weight: 350; background: #d5e3f1; border-bottom: 1px solid #000; border-radius: 4px 4px 0 0; }
.one { padding: 5px; }
.form input, .form textarea { width: 100%; height: 25px; padding: 0 0 4px 1px; background: #9fcfff; border: 1px solid #707070; outline: 1px solid #fff; outline-offset: -2px; min-width: 0; font-size: 14px; }
.one input { display: block; font-size: 15px; }
.form .olive { background: #c6c58c; }
.form .pale { background: #f7f7f7; }
.one textarea { display: block; height: 63px; resize: none; }
.rows { display: grid; grid-template-columns: 142px minmax(0, 1fr); gap: 3px 0; padding: 5px 5px 5px 6px; }
.form label { line-height: 20px; white-space: nowrap; }
.rows hr { grid-column: 1 / -1; width: 100%; margin: 2px 0 2px; border: 0; border-top: 1px solid #000; }
.pair { display: grid; grid-template-columns: 1fr 1fr; gap: 2px; }
.cut .drop { height: 20px; overflow: hidden; border-bottom: 0; align-items: start; }
.cut .drop > svg, .cut .drop select { margin-top: 1px; }
.cut label { line-height: 14px; }
.form select { font-size: 15px; }
.tool { display: grid; grid-template-columns: 142px minmax(0, 1fr); gap: 4px 0; padding: 5px 6px 6px 6px; }
.tool select { font-size: 14px; }
.pick { display: flex; align-items: center; gap: 4px; height: 25px; }
.pick .drop { flex: 1; }
.pick.top { align-items: start; height: 64px; }
.drop .ins.ins { z-index: 1; justify-self: start; width: 10px; height: 16px; margin-left: 5px; }
.drop.red select { padding-left: 19px; }
.lib { width: 22px; height: 22px; border: 1px solid #aaa; background: #e4e4e4; }
.lib svg { width: 20px; height: 20px; display: block; }
.pic { width: 64px; height: 64px; }
.dim { color: #888; }
.drop.off { background: #f0f0f0; border-color: #ccc; }
.drop.off select { background: #f0f0f0; opacity: 1; color: #000; }
.drop.off > svg { opacity: .5; }

.tabs { display: flex; gap: 1px; height: 27px; padding: 0 0 5px 9px; font-family: "Liberation Serif", "Noto Sans CJK TC", serif; }
.tabs button { display: flex; align-items: center; gap: 3px; height: 22px; padding: 0 8px 0 4px; border: solid #000; border-width: 0 1px 1px 0; border-right-color: #777; border-bottom-width: 2px; border-radius: 0 0 3px 3px; }
.tabs .cur { font-weight: 700; font-size: 16px; padding-right: 7px; }

.view { flex: 1; min-width: 0; overflow: hidden; background: linear-gradient(#fff, #efefef); border-top: 1px solid #666; border-right: 1px solid #ddd; }
.draw { display: block; margin-top: -1px; }
.crisp { shape-rendering: crispEdges; }
.size { font: 74px "Liberation Serif", serif; fill: #000; text-anchor: middle; }

.keys { width: 367px; flex: none; border: solid #888; border-width: 1px 1px 1px 0; margin-right: 1px; padding: 3px 9px 6px 15px; display: flex; flex-direction: column; box-shadow: inset 4px 0 #f0f0f0, inset 6px 0 #777; }
.keys .hold { margin: 0 -4px 0 -2px; }
.list { flex: 1; margin-top: 6px; background: #fff; border: 2px solid; border-color: #777 #ddd #ddd #777; }
.list table { width: 100%; border-collapse: separate; border-spacing: 0; table-layout: fixed; }
.list th { height: 23px; padding: 0 7px 2px; text-align: left; line-height: 19px; font-weight: 350; background: #f0f0f0; border: 1px solid; border-color: #fff #777 #777 #fff; }

.status { height: 45px; padding-top: 3px; border-top: 1px solid #999; }
.line { display: flex; gap: 3px; height: 21px; line-height: 19px; }
.line > span { height: 19px; white-space: nowrap; }
.msg { flex: 1; border: solid #999; border-width: 1px 0 0 1px; }
.tipmsg { flex: 1; padding-left: 2px; }
.c { border: 1px solid; border-color: #999 #fff #fff #999; padding-left: 2px; }
.line > .c { line-height: 17px; }
.w20 { width: 20px; }
.w35 { width: 35px; }
.w50 { width: 50px; }
.w55 { width: 55px; padding-left: 3px; }
.w99 { width: 99px; }
.blue { width: 13px; background: #0000f0; }
.pen { width: 100px; background: #fff; padding: 8px 2px 0; }
.pen i { display: block; height: 2px; background: #000090; }

.note { position: absolute; left: 0; top: 0; pointer-events: none; }
.note text { font: 300 37px "Noto Sans CJK TC", sans-serif; fill: #e02030; }
```
